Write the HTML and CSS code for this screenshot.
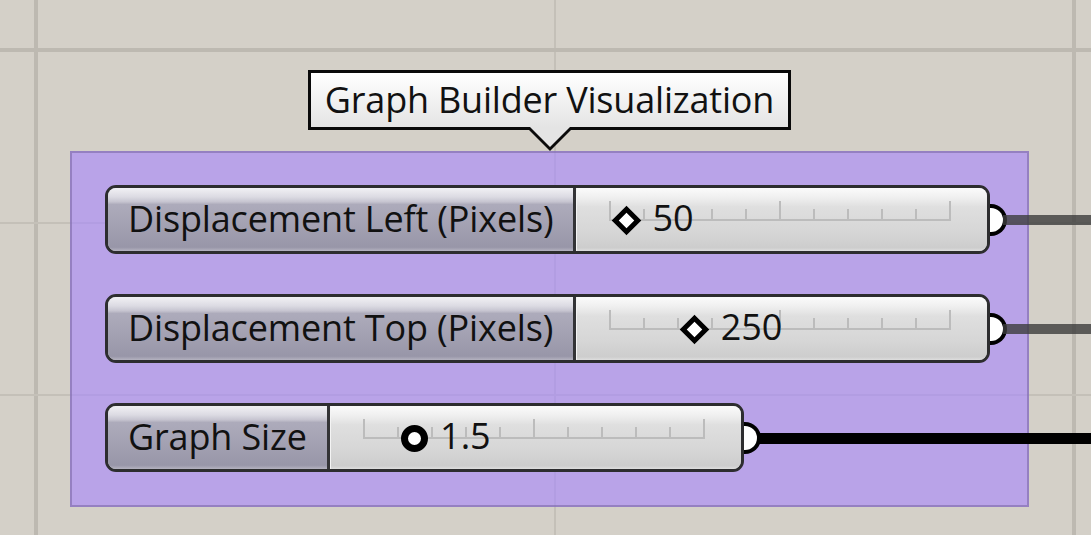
FILE: index.html
```html
<!DOCTYPE html>
<html>
<head>
<meta charset="utf-8">
<link rel="stylesheet" href="styles.css">
</head>
<body>
<div class="canvas">
  <div class="grid-v thick gv1"></div>
  <div class="grid-v thin gv2"></div>
  <div class="grid-v thick gv3"></div>
  <div class="grid-h thick gh1"></div>
  <div class="grid-h thin gh2"></div>
  <div class="grid-h thin gh3"></div>

  <div class="tooltip">Graph Builder Visualization</div>

  <div class="group">
    <div class="slider">
      <div class="label">Displacement Left (Pixels)</div>
      <div class="value">
        <div class="track">
          <i class="tick big"></i><i class="tick"></i><i class="tick"></i><i class="tick"></i><i class="tick"></i><i class="tick big"></i><i class="tick"></i><i class="tick"></i><i class="tick"></i><i class="tick"></i><i class="tick big"></i>
          <div class="grip-wrap" style="left:5%"><span class="grip diamond"></span><span class="num">50</span></div>
        </div>
      </div>
      <span class="port"><span class="wire gray"></span></span>
    </div>

    <div class="slider">
      <div class="label">Displacement Top (Pixels)</div>
      <div class="value">
        <div class="track">
          <i class="tick big"></i><i class="tick"></i><i class="tick"></i><i class="tick"></i><i class="tick"></i><i class="tick big"></i><i class="tick"></i><i class="tick"></i><i class="tick"></i><i class="tick"></i><i class="tick big"></i>
          <div class="grip-wrap" style="left:25%"><span class="grip diamond"></span><span class="num">250</span></div>
        </div>
      </div>
      <span class="port"><span class="wire gray"></span></span>
    </div>

    <div class="slider">
      <div class="label">Graph Size</div>
      <div class="value">
        <div class="track">
          <i class="tick big"></i><i class="tick"></i><i class="tick"></i><i class="tick"></i><i class="tick"></i><i class="tick big"></i><i class="tick"></i><i class="tick"></i><i class="tick"></i><i class="tick"></i><i class="tick big"></i>
          <div class="grip-wrap" style="left:15%"><span class="grip circle"></span><span class="num">1.5</span></div>
        </div>
      </div>
      <span class="port"><span class="wire black"></span></span>
    </div>
  </div>
</div>
</body>
</html>
```

FILE: styles.css
```css
html, body {
  margin: 0;
  padding: 0;
  background: #d4d0c8;
}

.canvas {
  position: relative;
  width: 1091px;
  height: 535px;
  overflow: hidden;
  background: #d4d0c8;
  font-family: "Open Sans", "Noto Sans", "Liberation Sans", sans-serif;
  color: #111;
}

/* grid lines */
.grid-v, .grid-h {
  position: absolute;
  background: #bdb9b1;
}
.grid-v { top: 0; bottom: 0; }
.grid-h { left: 0; right: 0; }
.grid-v.thick { width: 4px; }
.grid-h.thick { height: 4px; }
.grid-v.thin { width: 2px; background: #c4c0b8; }
.grid-h.thin { height: 2px; background: #c4c0b8; }
.gv1 { left: 34px; }
.gv2 { left: 554px; }
.gv3 { left: 1072px; }
.gh1 { top: 48px; }
.gh2 { top: 222px; }
.gh3 { top: 394px; }

/* tooltip */
.tooltip {
  position: absolute;
  left: 308px;
  top: 70px;
  width: 483px;
  height: 60px;
  box-sizing: border-box;
  border: 3px solid #0a0a0a;
  background: linear-gradient(to bottom, #ffffff 0%, #f2f2f2 50%, #e4e4e4 100%);
  display: flex;
  align-items: center;
  justify-content: center;
  padding-bottom: 2px;
  font-size: 36px;
  letter-spacing: -0.2px;
  z-index: 5;
}
.tooltip::before,
.tooltip::after {
  content: "";
  position: absolute;
  left: 50%;
  width: 0;
  height: 0;
  border-style: solid;
  border-color: transparent;
}
.tooltip::before {
  top: 100%;
  margin-left: -24px;
  border-width: 24px 24px 0 24px;
  border-top-color: #0a0a0a;
}
.tooltip::after {
  top: 100%;
  margin-left: -20px;
  border-width: 20px 20px 0 20px;
  border-top-color: #e4e4e4;
}

/* group */
.group {
  position: absolute;
  left: 70px;
  top: 151px;
  width: 959px;
  height: 356px;
  box-sizing: border-box;
  border: 2px solid rgba(120, 100, 160, 0.55);
  background: rgba(167, 133, 253, 0.6);
  display: flex;
  flex-direction: column;
  align-items: flex-start;
  gap: 40px;
  padding: 32px 0 0 33px;
}

/* slider */
.slider {
  position: relative;
  display: flex;
  height: 69px;
  box-sizing: border-box;
  border: 3px solid #2d2d2f;
  border-radius: 11px;
  background: #ccc;
}

.label {
  display: flex;
  align-items: center;
  padding: 0 20px 3px 20px;
  font-size: 36px;
  letter-spacing: -0.15px;
  white-space: nowrap;
  border-radius: 8px 0 0 8px;
  border-right: 3px solid #333336;
  background: linear-gradient(to bottom,
    #f1f1f4 0%, #dcdbe3 14%, #c6c4d0 22%, #adabbb 26%, #a3a1b2 60%, #9896a8 94%, #b4b2c0 100%);
}

.value {
  position: relative;
  width: 410px;
  border-left: 1px solid #f4f4f4;
  border-radius: 0 8px 8px 0;
  background: linear-gradient(to bottom,
    #fbfbfb 0%, #f0f0f0 14%, #e6e6e6 24%, #dfdfdf 30%, #d6d6d6 70%, #cdcdcd 95%, #dedede 100%);
}

.track {
  position: absolute;
  left: 32px;
  right: 36px;
  top: 13px;
  height: 18px;
  display: flex;
  justify-content: space-between;
  align-items: flex-end;
  border-bottom: 2px solid #bcbcbc;
}
.tick {
  display: block;
  width: 2px;
  height: 10px;
  background: #bcbcbc;
}
.tick.big {
  height: 18px;
}

.grip-wrap {
  position: absolute;
  top: 19px;
  width: 0;
  height: 0;
}
.grip {
  position: absolute;
  box-sizing: border-box;
  background: #fff;
  border: 5px solid #000;
}
.grip.diamond {
  width: 21px;
  height: 21px;
  left: -10.5px;
  top: -10.5px;
  transform: rotate(45deg);
  border-width: 5.5px;
}
.grip.circle {
  width: 27px;
  height: 27px;
  left: -13.5px;
  top: -13.5px;
  border-radius: 50%;
  border-width: 7px;
}
.num {
  position: absolute;
  left: 26px;
  top: -28px;
  font-size: 36px;
  line-height: 52px;
  white-space: nowrap;
}

/* output port + wire */
.port {
  position: absolute;
  right: -20px;
  top: 50%;
  width: 13px;
  height: 24px;
  margin-top: -16px;
  border: 4px solid #000;
  border-left: none;
  border-radius: 0 16px 16px 0;
  background: #fff;
}
.wire {
  position: absolute;
  left: 100%;
  top: 50%;
  width: 400px;
}
.wire.gray {
  height: 10px;
  margin-top: -5px;
  background: rgba(60, 60, 60, 0.8);
}
.wire.black {
  height: 11px;
  margin-top: -5px;
  background: #000;
}
```
